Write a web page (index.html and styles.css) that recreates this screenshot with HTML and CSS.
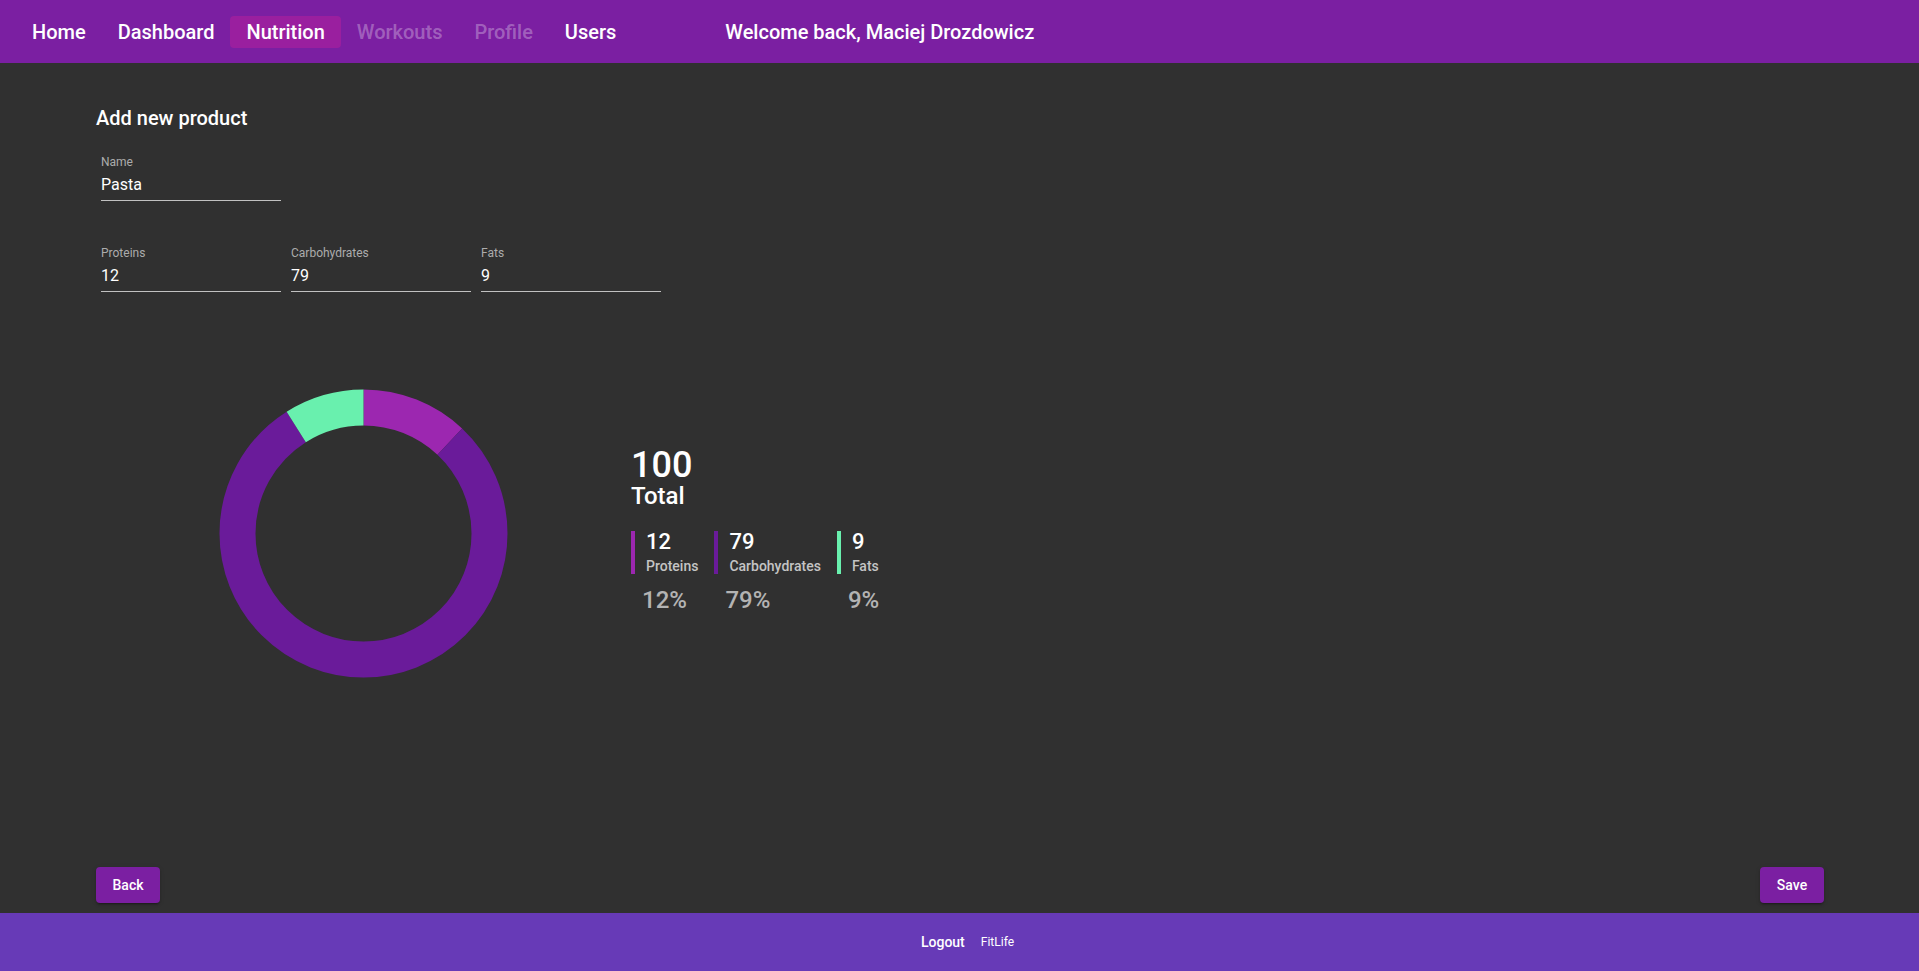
FILE: index.html
```html
<!DOCTYPE html>
<html lang="en">
<head>
<meta charset="utf-8">
<title>FitLife - Add new product</title>
<link rel="stylesheet" href="styles.css">
</head>
<body>
<div class="app">
  <nav class="topbar">
    <a class="nav-link">Home</a>
    <a class="nav-link">Dashboard</a>
    <a class="nav-link active">Nutrition</a>
    <a class="nav-link disabled">Workouts</a>
    <a class="nav-link disabled">Profile</a>
    <a class="nav-link">Users</a>
    <span class="welcome">Welcome back, Maciej Drozdowicz</span>
  </nav>

  <main class="main">
    <h2 class="title">Add new product</h2>

    <div class="form">
      <div class="row">
        <div class="field">
          <label class="field-label">Name</label>
          <div class="field-input">Pasta</div>
        </div>
      </div>
      <div class="row row-macros">
        <div class="field">
          <label class="field-label">Proteins</label>
          <div class="field-input">12</div>
        </div>
        <div class="field">
          <label class="field-label">Carbohydrates</label>
          <div class="field-input">79</div>
        </div>
        <div class="field">
          <label class="field-label">Fats</label>
          <div class="field-input">9</div>
        </div>
      </div>
    </div>

    <section class="chart-row">
      <svg class="donut" width="289" height="289" viewBox="0 0 289 289">
        <g transform="rotate(-90 144.5 144.5)" fill="none" stroke-width="36">
          <circle cx="144.5" cy="144.5" r="126" stroke="#9c27b0" stroke-dasharray="95.0 791.68" stroke-dashoffset="0"/>
          <circle cx="144.5" cy="144.5" r="126" stroke="#6a1b9a" stroke-dasharray="625.43 791.68" stroke-dashoffset="-95.0"/>
          <circle cx="144.5" cy="144.5" r="126" stroke="#69f0ae" stroke-dasharray="71.25 791.68" stroke-dashoffset="-720.43"/>
        </g>
      </svg>

      <div class="legend">
        <div class="total-num">100</div>
        <div class="total-label">Total</div>
        <div class="legend-cols">
          <div class="legend-col">
            <div class="legend-item proteins">
              <div class="legend-value">12</div>
              <div class="legend-name">Proteins</div>
            </div>
            <div class="legend-pct">12%</div>
          </div>
          <div class="legend-col">
            <div class="legend-item carbs">
              <div class="legend-value">79</div>
              <div class="legend-name">Carbohydrates</div>
            </div>
            <div class="legend-pct">79%</div>
          </div>
          <div class="legend-col">
            <div class="legend-item fats">
              <div class="legend-value">9</div>
              <div class="legend-name">Fats</div>
            </div>
            <div class="legend-pct">9%</div>
          </div>
        </div>
      </div>
    </section>

    <div class="actions">
      <button class="btn">Back</button>
      <button class="btn">Save</button>
    </div>
  </main>

  <footer class="footer">
    <button class="footer-logout">Logout</button>
    <span class="footer-brand">FitLife</span>
  </footer>
</div>
</body>
</html>
```

FILE: styles.css
```css
* {
  box-sizing: border-box;
}

html, body {
  margin: 0;
  padding: 0;
  height: 100%;
}

body {
  background: #303030;
  color: #ffffff;
  font-family: Roboto, "Helvetica Neue", "Liberation Sans", sans-serif;
}

.app {
  display: flex;
  flex-direction: column;
  height: 971px;
}

/* ---------- top bar ---------- */
.topbar {
  height: 63px;
  flex: none;
  background: #7b1fa2;
  display: flex;
  align-items: center;
  padding-left: 16px;
}

.nav-link {
  display: block;
  height: 32px;
  line-height: 32px;
  padding: 0 16px;
  font-size: 20px;
  font-weight: 500;
  color: #ffffff;
  border-radius: 4px;
  cursor: pointer;
}

.nav-link.active {
  background: #9a1f9f;
}

.nav-link.disabled {
  color: rgba(255, 255, 255, 0.3);
}

.welcome {
  margin-left: 93px;
  font-size: 20px;
  font-weight: 500;
  line-height: 32px;
}

/* ---------- main ---------- */
.main {
  flex: 1;
  display: flex;
  flex-direction: column;
  padding: 39px 95px 10px 96px;
}

.title {
  margin: 0;
  font-size: 20px;
  font-weight: 500;
  line-height: 32px;
}

.form {
  margin-top: 21px;
  padding-left: 5px;
}

.row {
  display: flex;
  gap: 10px;
}

.row-macros {
  margin-top: 45px;
}

.field {
  width: 180px;
  display: flex;
  flex-direction: column;
  border-bottom: 1px solid rgba(255, 255, 255, 0.7);
  padding-bottom: 5px;
}

.field-label {
  font-size: 12px;
  line-height: 14px;
  color: #acacac;
}

.field-input {
  margin-top: 6px;
  font-size: 16px;
  line-height: 20px;
  color: #ffffff;
}

/* ---------- chart ---------- */
.chart-row {
  margin-top: 97px;
  display: flex;
  align-items: flex-start;
  padding-left: 123px;
}

.donut {
  display: block;
  flex: none;
}

.legend {
  margin-left: 123px;
  margin-top: 57px;
  display: flex;
  flex-direction: column;
}

.total-num {
  font-size: 36px;
  font-weight: 500;
  line-height: 38px;
}

.total-label {
  font-size: 24px;
  font-weight: 500;
  line-height: 24px;
}

.legend-cols {
  display: flex;
  margin-top: 23px;
}

.legend-col {
  display: flex;
  flex-direction: column;
  margin-right: 16px;
}

.legend-item {
  border-left: 4px solid #9c27b0;
  padding-left: 11px;
  height: 43px;
}

.legend-item.carbs {
  border-left-color: #6a1b9a;
}

.legend-item.fats {
  border-left-color: #69f0ae;
}

.legend-value {
  font-size: 22px;
  font-weight: 500;
  line-height: 24px;
  margin-top: -1px;
}

.legend-name {
  font-size: 14px;
  font-weight: 500;
  line-height: 18px;
  margin-top: 3px;
  color: #c4c4c4;
}

.legend-pct {
  padding-left: 11px;
  margin-top: 14px;
  font-size: 24px;
  font-weight: 500;
  line-height: 24px;
  color: #b3b3b3;
}

/* ---------- actions ---------- */
.actions {
  margin-top: auto;
  display: flex;
  justify-content: space-between;
}

.btn {
  min-width: 64px;
  height: 36px;
  padding: 0 16px;
  border: 0;
  border-radius: 4px;
  background: #7b1fa2;
  color: #ffffff;
  font-family: Roboto, "Liberation Sans", sans-serif;
  font-size: 14px;
  font-weight: 500;
  line-height: 36px;
  box-shadow: 0 3px 1px -2px rgba(0, 0, 0, 0.2), 0 2px 2px 0 rgba(0, 0, 0, 0.14), 0 1px 5px 0 rgba(0, 0, 0, 0.12);
  cursor: pointer;
}

/* ---------- footer ---------- */
.footer {
  height: 58px;
  flex: none;
  background: #673ab7;
  display: flex;
  align-items: center;
  justify-content: center;
}

.footer-logout {
  background: transparent;
  border: 0;
  padding: 0 16px;
  color: #ffffff;
  font-family: Roboto, "Liberation Sans", sans-serif;
  font-size: 14px;
  font-weight: 500;
  line-height: 36px;
}

.footer-brand {
  font-size: 12px;
  color: #ffffff;
}
```
